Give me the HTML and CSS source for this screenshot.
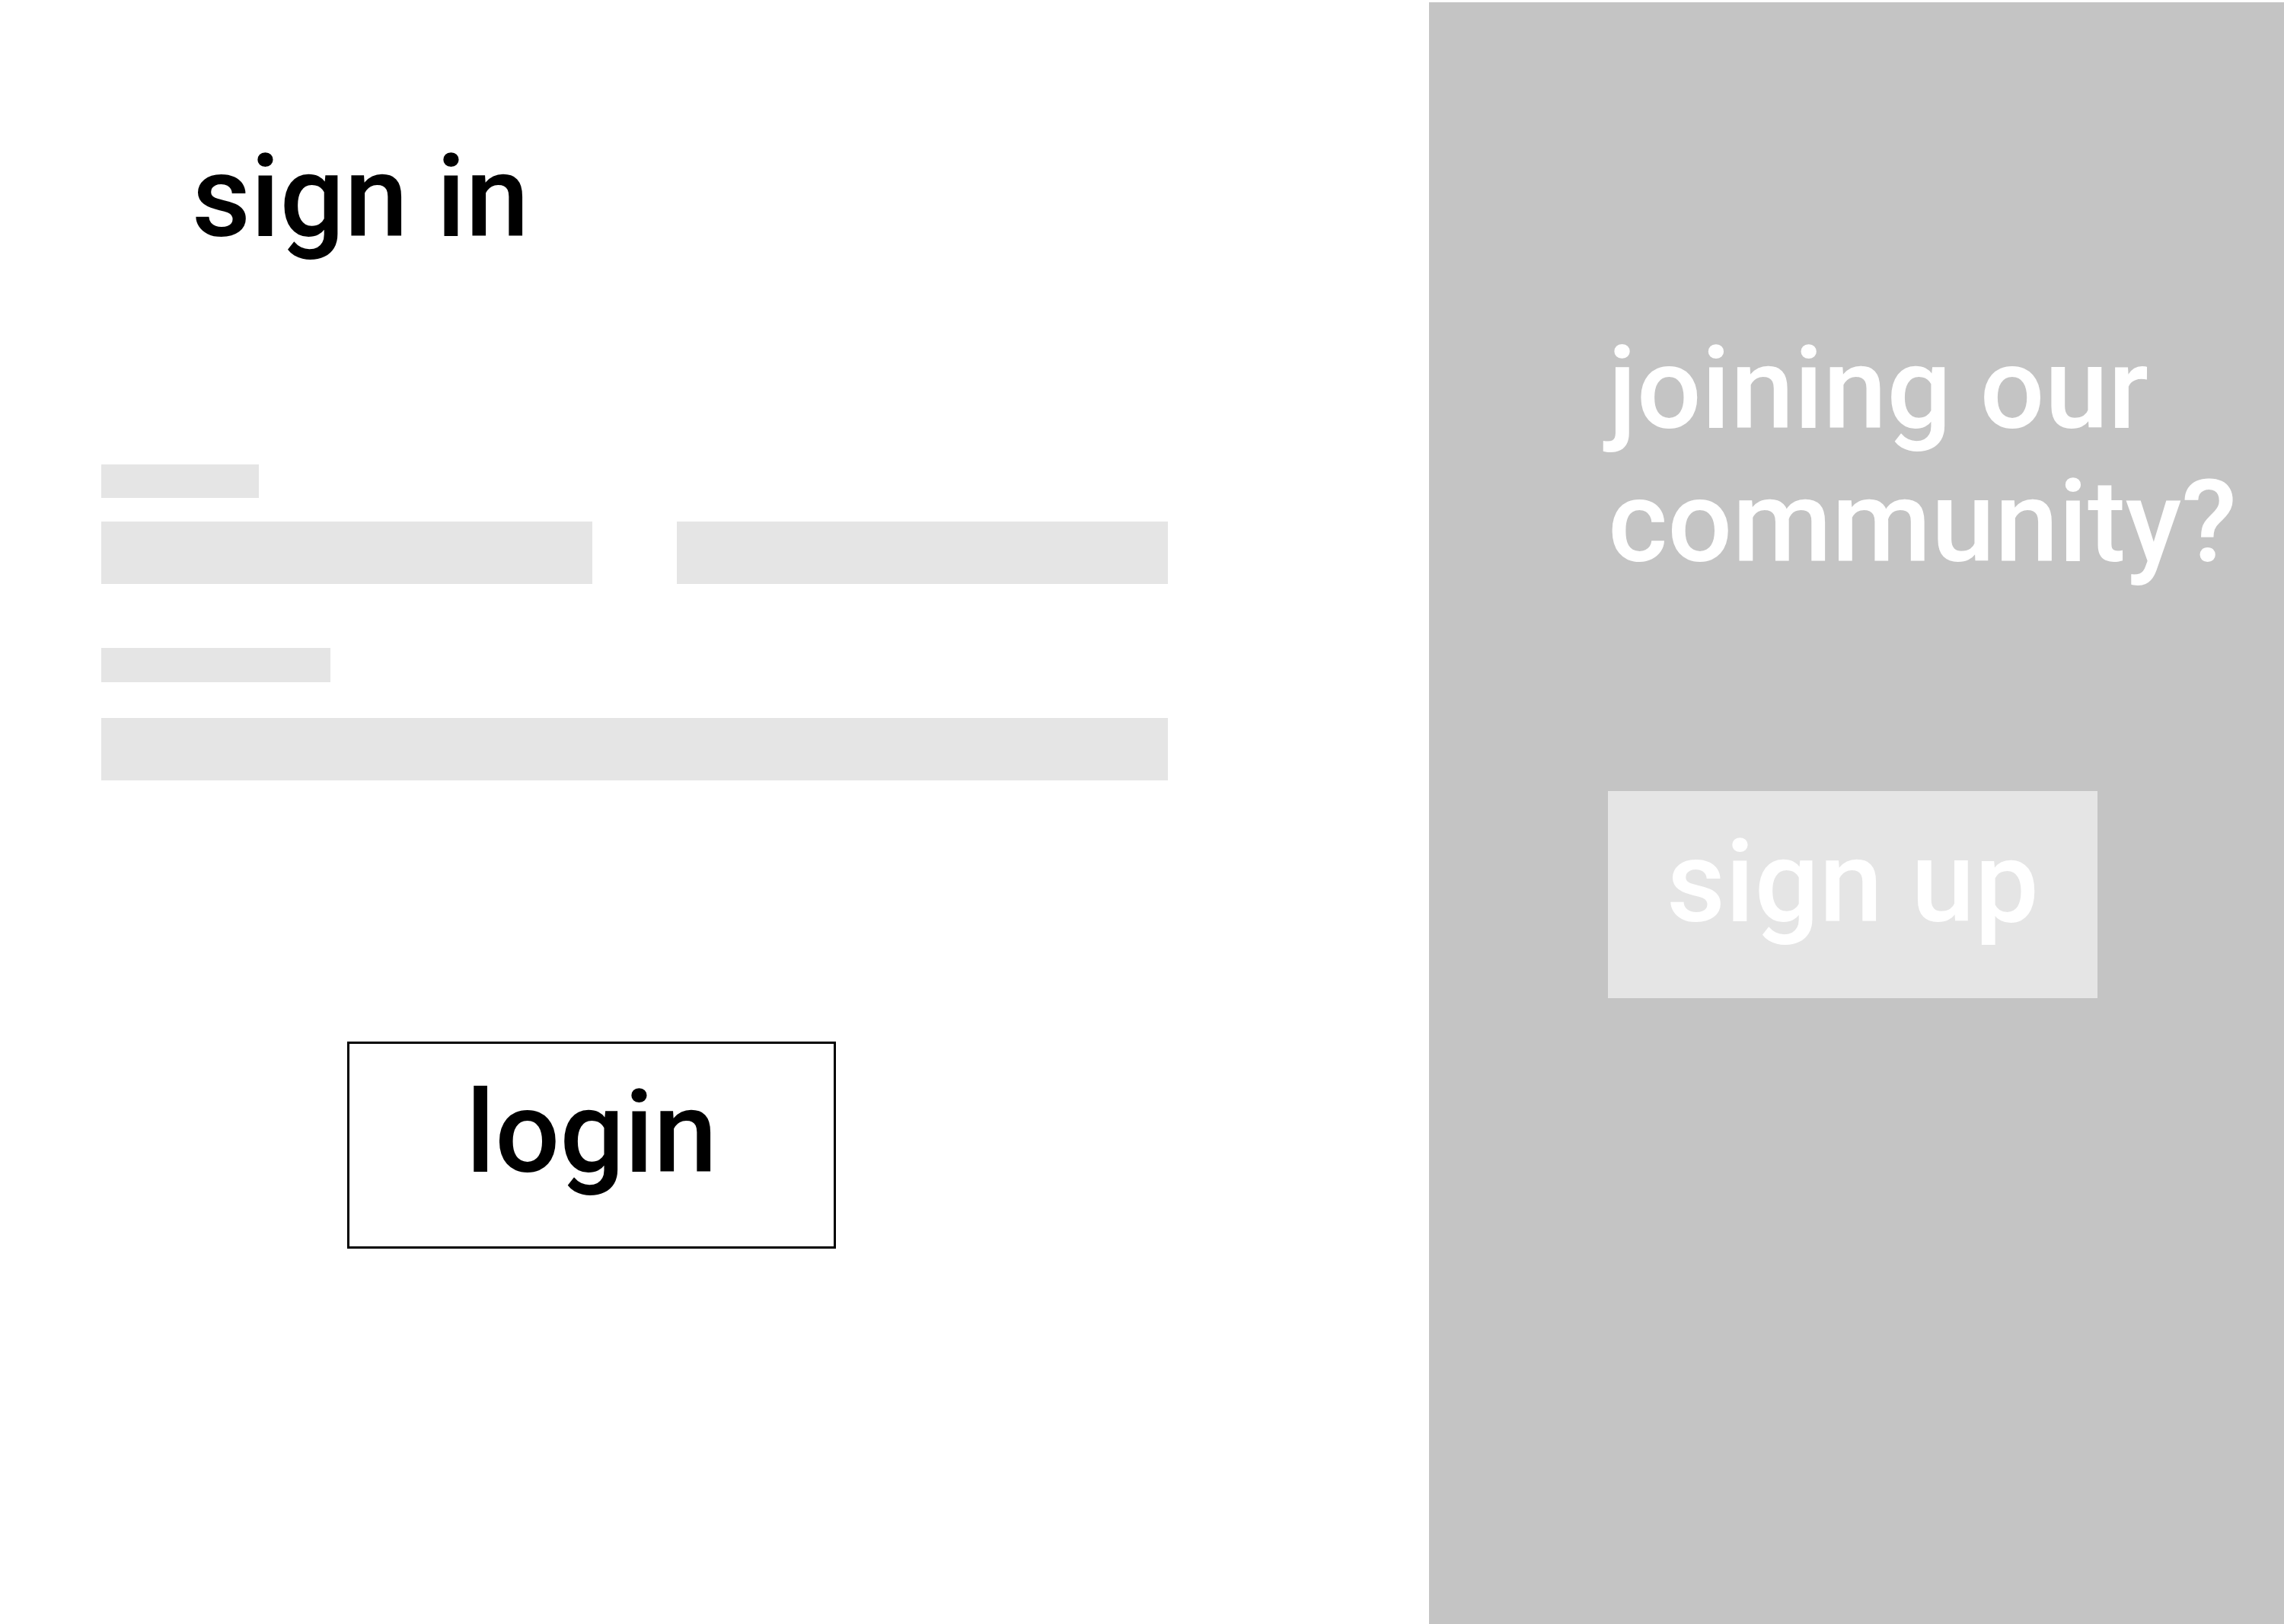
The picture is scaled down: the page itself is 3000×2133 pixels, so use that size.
FILE: index.html
```html
<!DOCTYPE html>
<html lang="en">
<head>
  <meta charset="utf-8">
  <meta name="viewport" content="width=device-width, initial-scale=1">
  <title>Sign in</title>
  <link rel="stylesheet" href="styles.css">
</head>
<body>
  <div class="page">
    <main class="login">
      <h1 class="title login-title">sign in</h1>
      <form class="form">
        <div class="field">
          <label class="label label-name" for="first-name" aria-label="Name"></label>
          <div class="row">
            <input class="input" id="first-name" type="text" aria-label="First name">
            <input class="input" id="last-name" type="text" aria-label="Last name">
          </div>
        </div>
        <div class="field field-password">
          <label class="label label-password" for="password" aria-label="Password"></label>
          <input class="input" id="password" type="password" aria-label="Password">
        </div>
        <button class="button button-outline" type="submit">login</button>
      </form>
    </main>
    <aside class="join">
      <h2 class="title join-title">joining our community?</h2>
      <button class="button button-filled" type="button">sign up</button>
    </aside>
  </div>
</body>
</html>
```

FILE: styles.css
```css
* {
  box-sizing: border-box;
}

body {
  margin: 0;
  background: #fff;
  color: #000;
  font-family: Roboto, "Liberation Sans", sans-serif;
}

.page {
  display: grid;
  grid-template-columns: 1877fr 1123fr;
  min-height: 100vh;
}

.title,
.button {
  font-family: inherit;
  font-size: 150px;
  font-weight: 500;
  line-height: 175px;
}

.title {
  margin: 0;
}

/* Sign-in side */
.login {
  padding: 172px 343px 172px 133px;
}

.login-title {
  padding-left: 119px;
}

.form {
  display: flex;
  flex-direction: column;
  margin-top: 263px;
}

.field {
  display: flex;
  flex-direction: column;
  gap: 31px;
}

.field-password {
  gap: 47px;
  margin-top: 84px;
}

.label {
  height: 44px;
  background: #e5e5e5;
}

.label-name {
  width: 207px;
}

.label-password {
  width: 301px;
  height: 45px;
}

.row {
  display: grid;
  grid-template-columns: 1fr 1fr;
  gap: 111px;
}

.input {
  width: 100%;
  height: 82px;
  padding: 0 24px;
  border: 0;
  border-radius: 0;
  background: #e5e5e5;
  font: 40px/48px Roboto, "Liberation Sans", sans-serif;
}

.button {
  display: block;
  width: 643px;
  height: 272px;
  border: 0;
  border-radius: 0;
  padding: 33px 0 64px;
  text-align: center;
  cursor: pointer;
}

.button-outline {
  width: 642px;
  margin: 343px 0 0 323px;
  border: 3px solid #000;
  padding: 30px 0 61px;
  background: #fff;
  color: #000;
}

/* Sign-up side */
.join {
  margin-top: 3px;
  padding: 421px 0 172px 235px;
  background: #c4c4c4;
  color: #fff;
}

.button-filled {
  margin-top: 265px;
  background: #e5e5e5;
  color: #fff;
}
```
